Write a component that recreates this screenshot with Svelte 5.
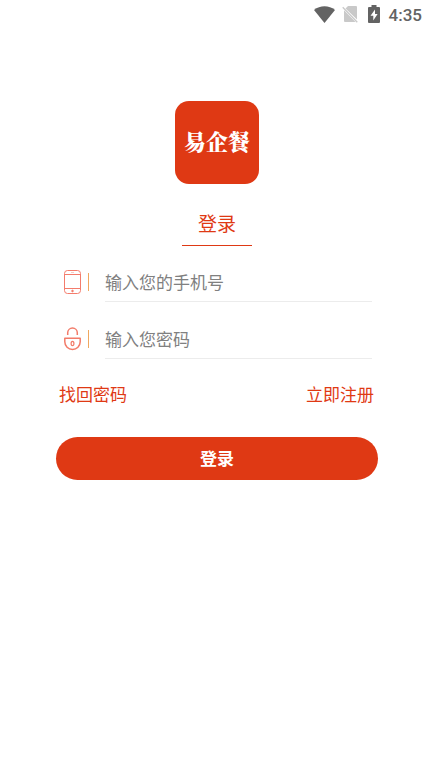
<script>
  let phone = $state('');
  let password = $state('');
</script>

<div class="screen">
  <header class="status">
    <svg width="21" height="17" viewBox="0 0 21 17" aria-label="Wi-Fi">
      <path d="M0 4C6-1 15-1 21 4L10.500 17Z" fill="#636363" />
    </svg>
    <svg class="sim" width="16" height="18" viewBox="0 0 16 18" aria-label="No SIM">
      <path d="M6 1h8q1 0 1 1v12.500L3.500 3.500ZM2 5.200 13.600 17H3q-1 0-1-1Z" fill="#c9c9c9" />
      <path d="M.7 2.300 15.300 17.200" stroke="#c9c9c9" stroke-width="1.300" />
    </svg>
    <svg class="battery" width="12" height="18" viewBox="0 0 12 18" aria-label="Charging">
      <path d="M3.500 0h5v2H11q1 0 1 1v14q0 1-1 1H1q-1 0-1-1V3q0-1 1-1h2.500Z" fill="#636363" />
      <path d="M7 4.500 2.500 10.800H5.300V15.500L9.600 8.900H7Z" fill="#fff" />
    </svg>
    <time>4:35</time>
  </header>

  <main>
    <div class="logo">易企餐</div>
    <h1>登录</h1>

    <form onsubmit={(event) => event.preventDefault()}>
      <div class="field">
        <label for="phone" aria-label="手机号">
          <svg width="17" height="24" viewBox="0 0 17 24" fill="none" stroke="#f47c6c">
            <rect x=".5" y=".5" width="16" height="23" rx="3" />
            <path d="M.5 4.500h16M.5 18.500h16" />
            <path d="M7 2.500h3" stroke-width=".7" opacity=".6" />
            <circle cx="8.500" cy="21" r=".8" fill="#e84f3c" />
          </svg>
        </label>
        <input id="phone" type="tel" placeholder="输入您的手机号" bind:value={phone} />
      </div>
      <div class="field">
        <label for="password" aria-label="密码">
          <svg width="17" height="24" viewBox="0 0 17 24" fill="none" stroke="#f27b69" stroke-width="1.500">
            <path d="M3.700 8V5.800a4.800 4.800 0 0 1 9.600 0V8" />
            <path d="M.8 11.200h15.400v3.600a7.700 7.700 0 0 1-15.400 0Z" stroke-linejoin="round" />
            <ellipse cx="8.500" cy="16.500" rx="1.400" ry="2.200" stroke-width="1.200" />
          </svg>
        </label>
        <input id="password" type="password" placeholder="输入您密码" bind:value={password} />
      </div>

      <nav>
        <a href="#recover">找回密码</a>
        <a href="#register">立即注册</a>
      </nav>

      <button type="submit">登录</button>
    </form>
  </main>
</div>

<style>
  :global(body) {
    margin: 0;
    background: #fff;
  }

  .screen {
    box-sizing: border-box;
    min-height: 100vh;
    background: #fff;
    color: #df3914;
    font-family: "Noto Sans CJK SC", sans-serif;
    font-size: 17px;
  }

  .status {
    display: flex;
    align-items: center;
    justify-content: flex-end;
    height: 28px;
    padding-right: 10px;
    color: #636363;
  }

  .sim {
    margin-left: 7px;
  }

  .battery {
    margin: 0 9px 0 10px;
  }

  time {
    font: 500 17px/28px Roboto, sans-serif;
    padding-top: 2px;
  }

  main {
    display: flex;
    flex-direction: column;
    align-items: center;
    padding: 73px 54px 0 56px;
  }

  .logo {
    box-sizing: border-box;
    width: 84px;
    height: 83px;
    border-radius: 14px;
    background: #df3914;
    color: #fff;
    font-family: "Noto Serif CJK SC", "Noto Sans CJK SC", serif;
    font-size: 22px;
    font-weight: 900;
    line-height: 80px;
    text-align: center;
  }

  h1 {
    box-sizing: border-box;
    width: 70px;
    height: 44px;
    margin: 18px 0 0;
    border-bottom: 1px solid #df3914;
    font-size: 19px;
    font-weight: 400;
    line-height: 42px;
    text-align: center;
  }

  form {
    width: 100%;
    padding-top: 17px;
  }

  .field {
    display: flex;
    align-items: flex-start;
    height: 57px;
    padding: 0 6px 0 8px;
    box-sizing: border-box;
  }

  label {
    display: flex;
    align-items: center;
    height: 38px;
  }

  label svg {
    display: block;
  }

  label::after {
    content: "";
    width: 1px;
    height: 18px;
    margin: 0 16px 0 7px;
    background: #f0a860;
  }

  input {
    box-sizing: border-box;
    flex: 1;
    min-width: 0;
    height: 39px;
    padding: 0 0 2px;
    border: 0;
    border-bottom: 1px solid #ececec;
    outline: 0;
    background: none;
    color: #333;
    font: inherit;
  }

  input::placeholder {
    color: #808080;
    opacity: 1;
  }

  nav {
    display: flex;
    justify-content: space-between;
    padding: 4px 4px 0 3px;
    line-height: 26px;
  }

  a {
    color: inherit;
    text-decoration: none;
  }

  button {
    display: block;
    width: 100%;
    height: 43px;
    margin-top: 30px;
    padding: 0 0 2px;
    border: 0;
    border-radius: 22px;
    background: #df3914;
    color: #fff;
    font: inherit;
    font-weight: 700;
    cursor: pointer;
  }
</style>
